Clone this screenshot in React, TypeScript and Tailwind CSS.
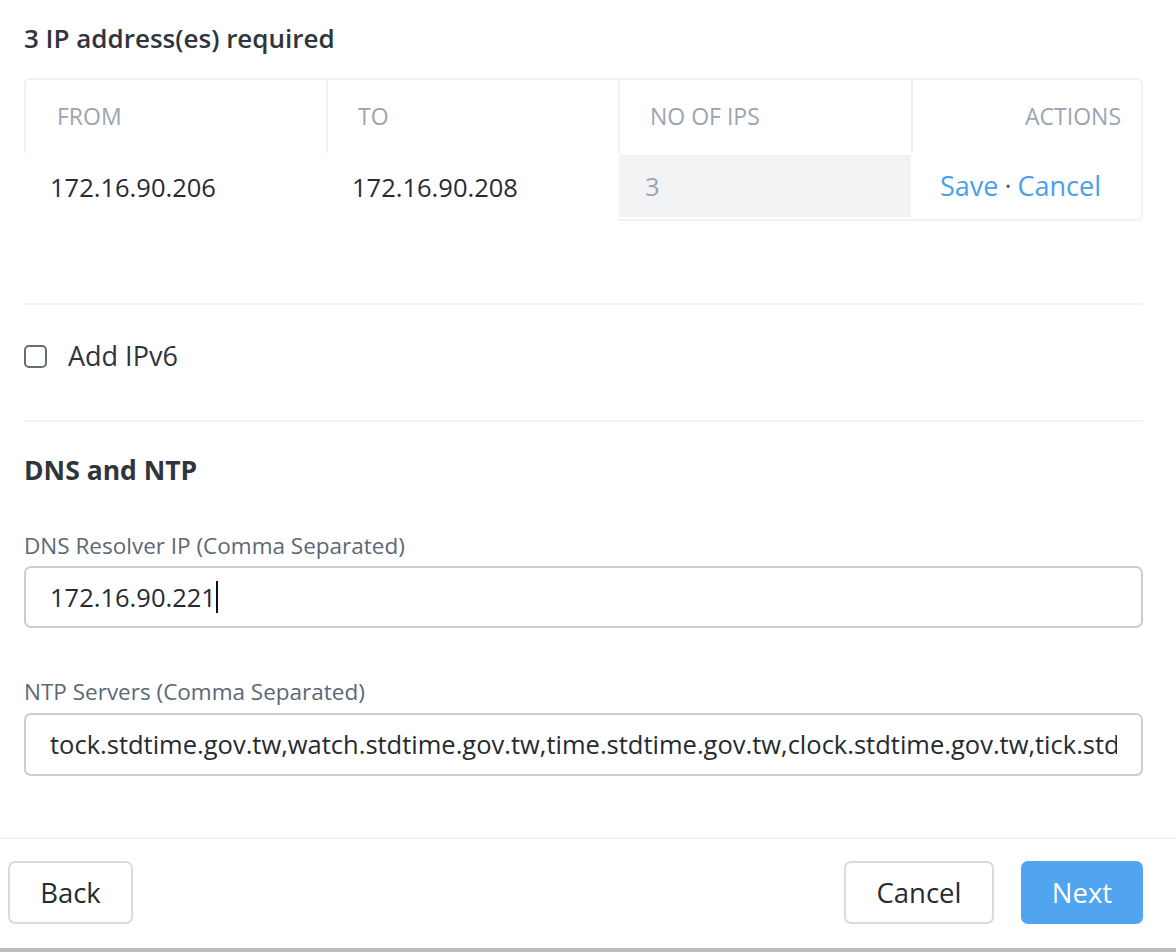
import React from "react";

const font = { fontFamily: "'Open Sans', 'Noto Sans', sans-serif" };

const ntpServers =
  "tock.stdtime.gov.tw,watch.stdtime.gov.tw,time.stdtime.gov.tw,clock.stdtime.gov.tw,tick.stdtime.gov.tw";

export default function App() {
  return (
    <div className="w-[1176px] h-[952px] bg-white text-[#262b31] overflow-hidden" style={font}>
      <div className="pl-[24px] pr-[33px]">
        {/* IP range */}
        <div className="h-[76px] flex items-center text-[26px] font-semibold text-[#2f353b]">
          3 IP address(es) required
        </div>
        <div className="mt-[2px]">
          <div className="grid grid-cols-[302px_292px_293px_1fr] h-[75px] border-t-2 border-r-2 border-[#f0f1f3] rounded-t-md text-[23px] text-[#9ba5b2] uppercase">
            <div className="border-l-2 border-[#f0f1f3] flex items-center pl-[31px]">From</div>
            <div className="border-l-2 border-[#f0f1f3] flex items-center pl-[30px]">To</div>
            <div className="border-l-2 border-[#f0f1f3] flex items-center pl-[30px]">No of IPs</div>
            <div className="border-l-2 border-[#f0f1f3] flex items-center justify-end pr-[20px]">Actions</div>
          </div>
          <div className="grid grid-cols-[302px_292px_1fr] h-[68px] text-[25.5px]">
            <div className="flex items-center pl-[26px]">172.16.90.206</div>
            <div className="flex items-center pl-[26px]">172.16.90.208</div>
            <div className="grid grid-cols-[293px_1fr] border-b-2 border-r-2 border-[#f0f1f3] rounded-br-md">
              <div className="bg-[#f2f3f5] my-[2px] ml-[1px] flex items-center pl-[26px] text-[#9ba5b2]">3</div>
              <div className="flex items-center justify-end pr-[40px] text-[27px] text-[#4a9fec]">
                <span>Save</span>
                <span className="text-[#555] mx-[6px]">·</span>
                <span>Cancel</span>
              </div>
            </div>
          </div>
        </div>

        <div className="mt-[82px] h-[2px] bg-[#f2f3f4]" />

        {/* IPv6 */}
        <label className="flex items-center gap-[21px] pt-[39px] pb-[52px] h-[115px]">
          <span className="w-[23px] h-[23px] border-2 border-[#646d78] rounded-[5px] bg-white" />
          <span className="text-[27px] font-medium text-[#2f353b]">Add IPv6</span>
        </label>

        <div className="h-[2px] bg-[#f2f3f4]" />

        {/* DNS and NTP */}
        <div className="mt-[34px] h-[30px] flex items-center text-[26.5px] font-bold text-[#2f353b]">DNS and NTP</div>

        <div className="mt-[48px] h-[24px] flex items-center text-[22.5px] text-[#5c6876]">
          DNS Resolver IP (Comma Separated)
        </div>
        <div className="mt-[8px] h-[62px] border-2 border-[#c8cdd4] rounded-[7px] flex items-center px-[24px] text-[25.5px]">
          <span>172.16.90.221</span>
          <span className="w-[2px] h-[32px] bg-[#111]" />
        </div>

        <div className="mt-[52px] h-[24px] flex items-center text-[22.5px] text-[#5c6876]">
          NTP Servers (Comma Separated)
        </div>
        <div className="mt-[9px] h-[63px] border-2 border-[#c8cdd4] rounded-[7px] flex items-center px-[24px] text-[25.5px]">
          <div className="overflow-hidden whitespace-nowrap w-full">{ntpServers}</div>
        </div>
      </div>

      <div className="mt-[61px] h-[2px] bg-[#f2f3f4]" />

      {/* Footer */}
      <div className="flex items-center justify-between pl-[8px] pr-[33px] pt-[22px] pb-[24px]">
        <button className="h-[63px] w-[125px] border-2 border-[#d8dce1] rounded-[7px] bg-white text-[27.5px]">
          Back
        </button>
        <div className="flex items-center gap-[27px]">
          <button className="h-[63px] w-[150px] border-2 border-[#d8dce1] rounded-[7px] bg-white text-[27.5px]">
            Cancel
          </button>
          <button className="h-[63px] w-[122px] rounded-[7px] bg-[#51a4f0] text-white text-[27.5px]">
            Next
          </button>
        </div>
      </div>
      <div className="h-[4px] bg-[#bdbdbd]" />
    </div>
  );
}
